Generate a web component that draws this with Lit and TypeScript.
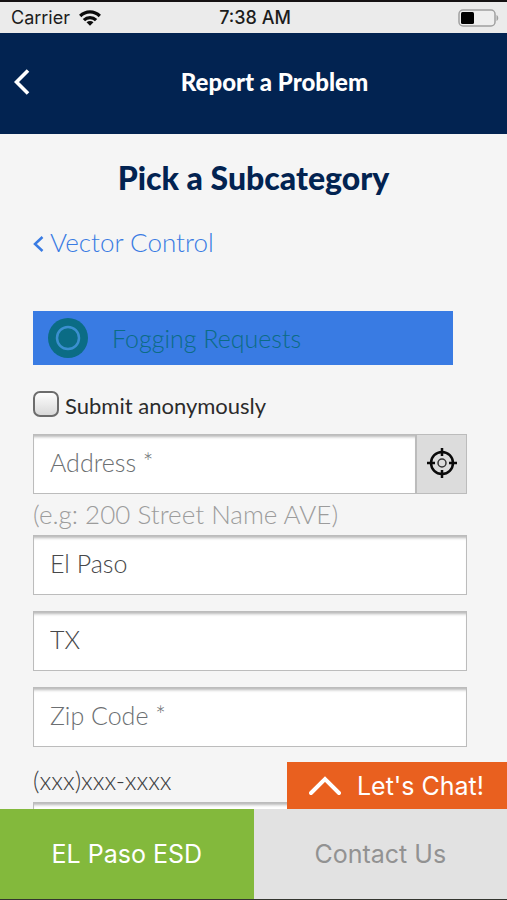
import { LitElement, html, css } from "lit";
import { customElement, property } from "lit/decorators.js";

@customElement("status-bar")
class StatusBar extends LitElement {
  static styles = css`
    :host {
      display: grid;
      grid-template-columns: 1fr auto 1fr;
      align-items: center;
      height: 33px;
      box-sizing: border-box;
      padding: 0 8px 0 11px;
      border-top: 2px solid #151213;
      background: #ebebeb;
      color: #1c1c1c;
      font: 400 18px/24px Inter, sans-serif;
    }
    .carrier {
      display: flex;
      align-items: center;
      gap: 9px;
    }
    .time {
      font-weight: 500;
    }
    .battery {
      justify-self: end;
    }
    svg {
      display: block;
    }
  `;

  render() {
    return html`
      <div class="carrier">
        <span>Carrier</span>
        <svg width="22" height="16" viewBox="0 0 22 16" fill="none" stroke="#0c0c0c" stroke-width="3.300">
          <path d="M1.200 6C6.800 .6 15.200 .6 20.800 6" />
          <path d="M4.900 10.100C8.400 6.700 13.600 6.700 17.100 10.100" />
          <path d="M11 15.800L7.500 12.300C9.500 10.500 12.500 10.500 14.500 12.300Z" fill="#0c0c0c" stroke="none" />
        </svg>
      </div>
      <span class="time">7:38 AM</span>
      <svg class="battery" width="41" height="18" viewBox="0 0 41 18">
        <rect x="1" y="1" width="36" height="16" rx="4" fill="#efefef" stroke="#a0a0a0" stroke-width="1.500" />
        <rect x="3" y="3" width="13" height="12" rx="1.500" fill="#000" />
        <path d="M38.500 6C40.800 7 40.800 11 38.500 12Z" fill="#a0a0a0" />
      </svg>
    `;
  }
}

@customElement("form-field")
class FormField extends LitElement {
  @property() label = "";
  @property() value = "";
  @property() placeholder = "";
  @property({ type: Boolean }) locate = false;

  static styles = css`
    :host {
      display: flex;
    }
    input {
      flex: 1;
      min-width: 0;
      height: 60px;
      box-sizing: border-box;
      margin: 0;
      padding: 0 16px 4px;
      border: 1px solid #bcbcbc;
      border-radius: 0;
      outline: none;
      background: #fff;
      box-shadow: inset 0 4px 3px -2px #b8b8b8;
      color: #47484a;
      font: 300 25px/32px Lato, sans-serif;
    }
    input::placeholder {
      color: #6c6f72;
      opacity: 1;
    }
    button {
      display: flex;
      align-items: center;
      justify-content: center;
      width: 51px;
      padding: 0 0 2px;
      border: 1px solid #bcbcbc;
      background: #dcdcdc;
    }
  `;

  render() {
    return html`
      <input type="text" aria-label=${this.label} .value=${this.value} placeholder=${this.placeholder} />
      ${this.locate
        ? html`<button type="button" aria-label="Use my location">
            <svg width="30" height="30" viewBox="0 0 30 30" fill="none" stroke="#0a0a0a">
              <circle cx="15" cy="15" r="11" stroke-width="2.500" />
              <circle cx="15" cy="15" r="4" stroke="#333" stroke-width="1.500" />
              <path d="M15 0V8M15 22V30M0 15H8M22 15H30" stroke-width="2.500" />
            </svg>
          </button>`
        : ""}
    `;
  }
}

@customElement("app-root")
class AppRoot extends LitElement {
  static styles = css`
    :host {
      display: flex;
      flex-direction: column;
      height: 100vh;
      box-sizing: border-box;
      border-bottom: 1px solid #33352f;
      background: #f5f5f5;
      font: 300 25px/32px Lato, sans-serif;
    }
    a {
      text-decoration: none;
    }
    header {
      display: grid;
      grid-template-columns: 40px 1fr 40px;
      align-items: center;
      flex: none;
      height: 101px;
      box-sizing: border-box;
      padding: 0 0 4px 2px;
      background: #022351;
      color: #fff;
    }
    header h1 {
      grid-column: 2;
      margin: 0;
      padding-left: 40px;
      text-align: center;
      font: 900 24px/32px Lato, sans-serif;
    }
    .back {
      display: flex;
      justify-content: center;
      padding: 0;
      border: 0;
      background: none;
    }
    main {
      flex: 1;
      min-height: 0;
      overflow-y: auto;
      scrollbar-width: none;
      padding: 24px 40px 0 33px;
    }
    h2 {
      margin: 0 -7px 28px 0;
      color: #022351;
      text-align: center;
      font: 900 32px/40px Lato, sans-serif;
    }
    .crumb {
      display: flex;
      align-items: center;
      gap: 6px;
      margin-bottom: 53px;
      color: #397be3;
      font-size: 26px;
    }
    .crumb svg {
      margin-top: 4px;
    }
    .option {
      display: flex;
      align-items: center;
      gap: 24px;
      width: calc(100% - 14px);
      height: 54px;
      padding: 0 15px;
      border: 0;
      background: #397be3;
      color: #0b6c85;
      font: inherit;
    }
    .anonymous {
      display: flex;
      align-items: center;
      gap: 6px;
      margin: 25px 0 12px;
      height: 32px;
      color: #2b2b2b;
      font-size: 22px;
      font-weight: 400;
    }
    .anonymous input {
      appearance: none;
      width: 26px;
      height: 26px;
      margin: 0 0 4px;
      border: 2px solid #6c6c6c;
      border-radius: 7px;
      background: linear-gradient(#fdfdfd, #d9d9d9);
    }
    .hint {
      margin: 0;
      padding: 4px 0 5px;
      color: #9c9c9c;
      font-size: 26px;
    }
    .fields {
      display: grid;
      gap: 16px;
    }
    .phone {
      display: block;
      padding: 17px 0 6px;
      color: #3c3d3f;
    }
    .dock {
      position: relative;
      flex: none;
    }
    .chat {
      position: absolute;
      right: 0;
      bottom: 100%;
      display: flex;
      align-items: center;
      gap: 16px;
      height: 47px;
      padding: 0 23px 0 22px;
      border: 0;
      background: #e9601f;
      color: #fff;
      font: 400 25px/32px Inter, sans-serif;
    }
    nav {
      display: grid;
      grid-template-columns: 1fr 1fr;
    }
    nav a {
      display: flex;
      align-items: center;
      justify-content: center;
      height: 90px;
      background: #e2e2e2;
      color: #929292;
      font: 400 25px/32px Inter, sans-serif;
    }
    nav .current {
      background: #83b93c;
      color: #fff;
    }
  `;

  render() {
    return html`
      <status-bar></status-bar>
      <header>
        <button class="back" type="button" aria-label="Back">
          <svg width="16" height="26" viewBox="0 0 16 26" fill="none" stroke="#fff" stroke-width="3.600">
            <path d="M14 1.500L2.500 13L14 24.500" />
          </svg>
        </button>
        <h1>Report a Problem</h1>
      </header>
      <main>
        <h2>Pick a Subcategory</h2>
        <a class="crumb" href="#categories">
          <svg width="11" height="16" viewBox="0 0 11 16" fill="none" stroke="#397be3" stroke-width="2.500">
            <path d="M9.500 1L2 8L9.500 15" />
          </svg>
          Vector Control
        </a>
        <button class="option" type="button">
          <svg width="40" height="40" viewBox="0 0 40 40">
            <circle cx="20" cy="20" r="20" fill="#0b6c85" />
            <circle cx="20" cy="20" r="11" fill="none" stroke="#3b8fd0" stroke-width="2.500" />
          </svg>
          Fogging Requests
        </button>
        <label class="anonymous"><input type="checkbox" />Submit anonymously</label>
        <form-field label="Address" placeholder="Address *" locate></form-field>
        <p class="hint">(e.g: 200 Street Name AVE)</p>
        <div class="fields">
          <form-field label="City" value="El Paso"></form-field>
          <form-field label="State" value="TX"></form-field>
          <form-field label="Zip code" placeholder="Zip Code *"></form-field>
        </div>
        <span class="phone">(xxx)xxx-xxxx</span>
        <form-field label="Phone number, (xxx)xxx-xxxx"></form-field>
      </main>
      <div class="dock">
        <button class="chat" type="button">
          <svg width="32" height="20" viewBox="0 0 32 20" fill="none" stroke="#fff" stroke-width="4" stroke-linecap="round">
            <path d="M2 17L16 3L30 17" />
          </svg>
          Let's Chat!
        </button>
        <nav>
          <a class="current" href="#esd">EL Paso ESD</a>
          <a href="#contact">Contact Us</a>
        </nav>
      </div>
    `;
  }
}
